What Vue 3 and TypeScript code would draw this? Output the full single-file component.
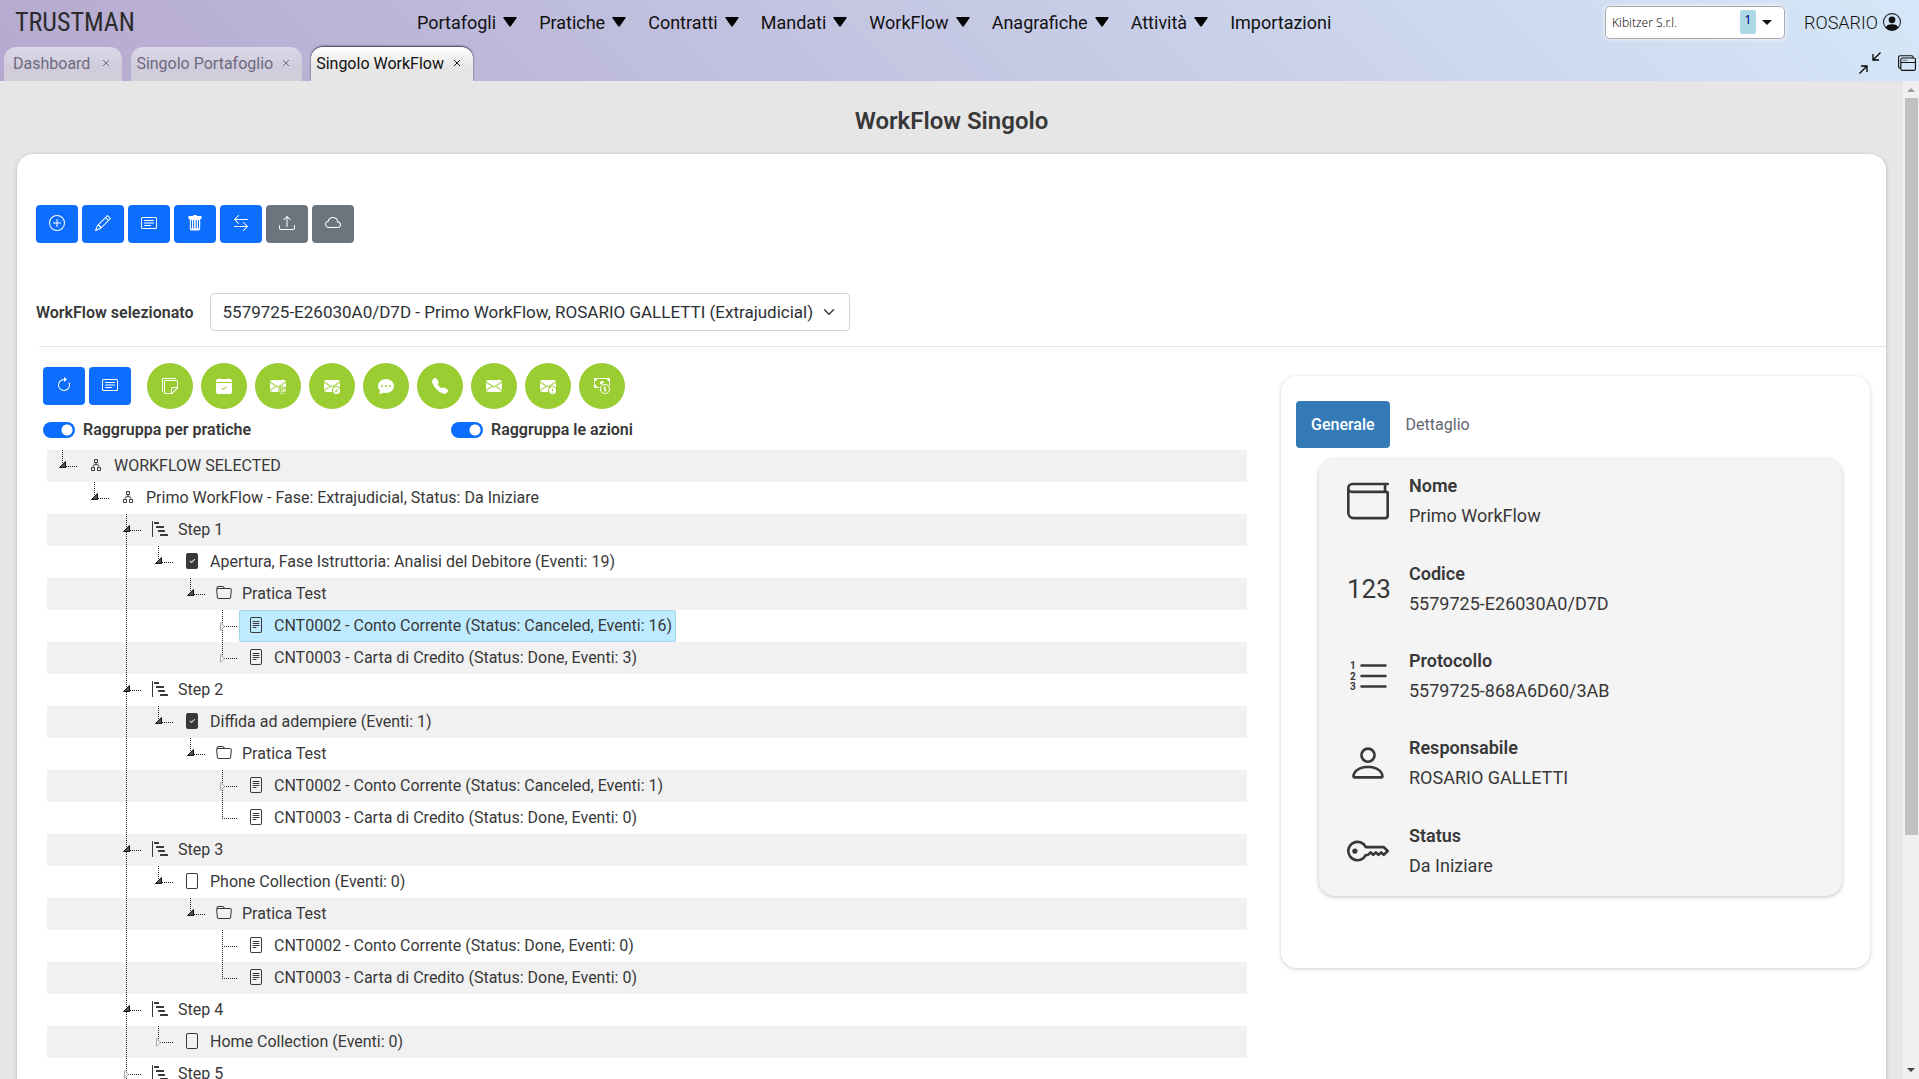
<script setup lang="ts">
import { ref } from 'vue'

type Toggle = 'open' | 'closed' | 'leaf'
type NodeIcon = 'org' | 'steps' | 'fileCheck' | 'file' | 'fileText' | 'folder'

interface TreeRow {
  level: number
  text: string
  icon: NodeIcon
  toggle: Toggle
  last: boolean
}

const icons = {
  plus: 'M8 15A7 7 0 1 1 8 1a7 7 0 0 1 0 14m0 1A8 8 0 1 0 8 0a8 8 0 0 0 0 16 M8 4a.5.5 0 0 1 .5.5v3h3a.5.5 0 0 1 0 1h-3v3a.5.5 0 0 1-1 0v-3h-3a.5.5 0 0 1 0-1h3v-3A.5.5 0 0 1 8 4',
  pencil: 'M12.146.146a.5.5 0 0 1 .708 0l3 3a.5.5 0 0 1 0 .708l-10 10a.5.5 0 0 1-.168.11l-5 2a.5.5 0 0 1-.65-.65l2-5a.5.5 0 0 1 .11-.168zM11.207 2.5 13.5 4.793 14.793 3.5 12.5 1.207zm1.586 3L10.5 3.207 4 9.707V10h.5a.5.5 0 0 1 .5.5v.5h.5a.5.5 0 0 1 .5.5v.5h.293zm-9.761 5.175-.106.106-1.528 3.821 3.821-1.528.106-.106A.5.5 0 0 1 5 12.5V12h-.5a.5.5 0 0 1-.5-.5V11h-.5a.5.5 0 0 1-.468-.325',
  card: 'M14.5 3a.5.5 0 0 1 .5.5v9a.5.5 0 0 1-.5.5h-13a.5.5 0 0 1-.5-.5v-9a.5.5 0 0 1 .5-.5zm-13-1A1.5 1.5 0 0 0 0 3.5v9A1.5 1.5 0 0 0 1.5 14h13a1.5 1.5 0 0 0 1.5-1.5v-9A1.5 1.5 0 0 0 14.5 2z M3 5.5a.5.5 0 0 1 .5-.5h9a.5.5 0 0 1 0 1h-9a.5.5 0 0 1-.5-.5M3 8a.5.5 0 0 1 .5-.5h9a.5.5 0 0 1 0 1h-9A.5.5 0 0 1 3 8m0 2.5a.5.5 0 0 1 .5-.5h6a.5.5 0 0 1 0 1h-6a.5.5 0 0 1-.5-.5',
  trash: 'M2 1h4a1 1 0 0 1 1-1h2a1 1 0 0 1 1 1h4q.5 0 .5.5V4h-13V1.500Q1.500 1 2 1M2.800 4h10.400v9.500a2 2 0 0 1-2 2H4.800a2 2 0 0 1-2-2zM4 5v8.500h1V5zM6.200 5v8.500h1V5zM8.800 5v8.500h1V5zM11 5v8.500h1V5z',
  swap: 'M1 11.5a.5.5 0 0 0 .5.5h11.793l-3.147 3.146a.5.5 0 0 0 .708.708l4-4a.5.5 0 0 0 0-.708l-4-4a.5.5 0 0 0-.708.708L13.293 11H1.5a.5.5 0 0 0-.5.5m14-7a.5.5 0 0 1-.5.5H2.707l3.147 3.146a.5.5 0 1 1-.708.708l-4-4a.5.5 0 0 1 0-.708l4-4a.5.5 0 1 1 .708.708L2.707 4H14.5a.5.5 0 0 1 .5.5',
  upload: 'M.5 9.9a.5.5 0 0 1 .5.5v2.5a1 1 0 0 0 1 1h12a1 1 0 0 0 1-1v-2.5a.5.5 0 0 1 1 0v2.5a2 2 0 0 1-2 2H2a2 2 0 0 1-2-2v-2.5a.5.5 0 0 1 .5-.5 M7.646 1.146a.5.5 0 0 1 .708 0l3 3a.5.5 0 0 1-.708.708L8.5 2.707V11.5a.5.5 0 0 1-1 0V2.707L5.354 4.854a.5.5 0 1 1-.708-.708z',
  cloud: 'M4.406 3.342A5.53 5.53 0 0 1 8 2c2.69 0 4.923 2 5.166 4.579C14.758 6.804 16 8.137 16 9.773 16 11.569 14.502 13 12.687 13H3.781C1.708 13 0 11.366 0 9.318c0-1.763 1.266-3.223 2.942-3.593.143-.863.698-1.723 1.464-2.383m.653.757c-.757.653-1.153 1.44-1.153 2.056v.448l-.445.049C2.064 6.805 1 7.952 1 9.318 1 10.785 2.23 12 3.781 12h8.906C13.98 12 15 10.988 15 9.773c0-1.216-1.02-2.228-2.313-2.228h-.5v-.5C12.188 4.825 10.328 3 8 3a4.53 4.53 0 0 0-2.941 1.1z',
  refresh: 'M8 3a5 5 0 1 0 4.546 2.914.5.5 0 0 1 .908-.417A6 6 0 1 1 8 2z M8 4.466V.534a.25.25 0 0 1 .41-.192l2.36 1.966c.12.1.12.284 0 .384L8.41 4.658A.25.25 0 0 1 8 4.466',
  notes: 'M1.5 0A1.5 1.5 0 0 0 0 1.5V13a1 1 0 0 0 1 1V1.5a.5.5 0 0 1 .5-.5H14a1 1 0 0 0-1-1z M3.5 2A1.5 1.5 0 0 0 2 3.5v11A1.5 1.5 0 0 0 3.5 16h6.086a1.5 1.5 0 0 0 1.06-.44l4.915-4.914A1.5 1.5 0 0 0 16 9.586V3.5A1.5 1.5 0 0 0 14.5 2zM3 3.5a.5.5 0 0 1 .5-.5h11a.5.5 0 0 1 .5.5V9h-4.5A1.5 1.5 0 0 0 9 10.5V15H3.5a.5.5 0 0 1-.5-.5zm7 11.293V10.5a.5.5 0 0 1 .5-.5h4.293z',
  calendar: 'M4 .5a.5.5 0 0 0-1 0V1H2a2 2 0 0 0-2 2v1h16V3a2 2 0 0 0-2-2h-1V.5a.5.5 0 0 0-1 0V1H4zM16 14V5H0v9a2 2 0 0 0 2 2h12a2 2 0 0 0 2-2m-5.146-5.146-3 3a.5.5 0 0 1-.708 0l-1.5-1.5a.5.5 0 0 1 .708-.708L7.5 10.793l2.646-2.647a.5.5 0 0 1 .708.708',
  envelope: 'M.05 3.555A2 2 0 0 1 2 2h12a2 2 0 0 1 1.95 1.555L8 8.414zM0 4.697v7.104l5.803-3.558zM6.761 8.83l-6.57 4.027A2 2 0 0 0 2 14h12a2 2 0 0 0 1.808-1.144l-6.57-4.027L8 9.586zm3.436-.586L16 11.801V4.697z',
  envelopeCut: 'M.05 3.555A2 2 0 0 1 2 2h12a2 2 0 0 1 1.95 1.555L8 8.414zM0 4.697v7.104l5.803-3.558zM6.761 8.83l-6.57 4.026A2 2 0 0 0 2 14h6.256A4.5 4.5 0 0 1 8 12.5a4.49 4.49 0 0 1 1.606-3.446l-.367-.225L8 9.586zM16 4.697v4.974A4.5 4.5 0 0 0 12.5 8a4.5 4.5 0 0 0-1.965.45l-.338-.207z',
  badgeCheck: 'M16 12.5a3.5 3.5 0 1 1-7 0 3.5 3.5 0 0 1 7 0m-1.993-1.679a.5.5 0 0 0-.686.172l-1.17 1.95-.547-.547a.5.5 0 0 0-.708.708l.774.773a.75.75 0 0 0 1.174-.144l1.335-2.226a.5.5 0 0 0-.172-.686',
  badgeAlert: 'M12.5 16a3.5 3.5 0 1 0 0-7 3.5 3.5 0 0 0 0 7m.5-5v1.5a.5.5 0 0 1-1 0V11a.5.5 0 0 1 1 0m0 3a.5.5 0 1 1-1 0 .5.5 0 0 1 1 0',
  chat: 'M16 8c0 3.866-3.582 7-8 7a9 9 0 0 1-2.347-.306c-.584.296-1.925.864-4.181 1.234-.2.032-.352-.176-.273-.362.354-.836.674-1.95.77-2.966C.744 11.37 0 9.76 0 8c0-3.866 3.582-7 8-7s8 3.134 8 7M5 8a1 1 0 1 0-2 0 1 1 0 0 0 2 0m4 0a1 1 0 1 0-2 0 1 1 0 0 0 2 0m3 1a1 1 0 1 0 0-2 1 1 0 0 0 0 2',
  phone: 'M1.885.511a1.745 1.745 0 0 1 2.61.163L6.29 2.98c.329.423.445.974.315 1.494l-.547 2.19a.68.68 0 0 0 .178.643l2.457 2.457a.68.68 0 0 0 .644.178l2.189-.547a1.75 1.75 0 0 1 1.494.315l2.306 1.794c.829.645.905 1.87.163 2.611l-1.034 1.034c-.74.74-1.846 1.065-2.877.702a18.6 18.6 0 0 1-7.01-4.42 18.6 18.6 0 0 1-4.42-7.009c-.362-1.03-.037-2.137.703-2.877z',
  cash: 'M11 15a4 4 0 1 0 0-8 4 4 0 0 0 0 8m5-4a5 5 0 1 1-10 0 5 5 0 0 1 10 0 M1 0a1 1 0 0 0-1 1v8a1 1 0 0 0 1 1h4.083q.088-.517.258-1H3a2 2 0 0 0-2-2V3a2 2 0 0 0 2-2h10a2 2 0 0 0 2 2v3.528c.38.34.717.728 1 1.154V1a1 1 0 0 0-1-1z M9.998 5.083 10 5a2 2 0 1 0-3.132 1.65 6 6 0 0 1 3.13-1.567',
  steps: 'M.5 0a.5.5 0 0 1 .5.5v15a.5.5 0 0 1-1 0V.5A.5.5 0 0 1 .5 0M2 1.5a.5.5 0 0 1 .5-.5h4a.5.5 0 0 1 .5.5v1a.5.5 0 0 1-.5.5h-4a.5.5 0 0 1-.5-.5zm2 4a.5.5 0 0 1 .5-.5h7a.5.5 0 0 1 .5.5v1a.5.5 0 0 1-.5.5h-7a.5.5 0 0 1-.5-.5zm2 4a.5.5 0 0 1 .5-.5h6a.5.5 0 0 1 .5.5v1a.5.5 0 0 1-.5.5h-6a.5.5 0 0 1-.5-.5zm2 4a.5.5 0 0 1 .5-.5h7a.5.5 0 0 1 .5.5v1a.5.5 0 0 1-.5.5h-7a.5.5 0 0 1-.5-.5z',
  fileCheck: 'M12 0H4a2 2 0 0 0-2 2v12a2 2 0 0 0 2 2h8a2 2 0 0 0 2-2V2a2 2 0 0 0-2-2m-1.146 6.854-3 3a.5.5 0 0 1-.708 0l-1.5-1.5a.5.5 0 1 1 .708-.708L7.5 8.793l2.646-2.647a.5.5 0 0 1 .708.708',
  file: 'M4 0a2 2 0 0 0-2 2v12a2 2 0 0 0 2 2h8a2 2 0 0 0 2-2V2a2 2 0 0 0-2-2zm0 1h8a1 1 0 0 1 1 1v12a1 1 0 0 1-1 1H4a1 1 0 0 1-1-1V2a1 1 0 0 1 1-1',
  fileText: 'M5 4a.5.5 0 0 0 0 1h6a.5.5 0 0 0 0-1zm-.5 2.5A.5.5 0 0 1 5 6h6a.5.5 0 0 1 0 1H5a.5.5 0 0 1-.5-.5M5 8a.5.5 0 0 0 0 1h6a.5.5 0 0 0 0-1zm0 2a.5.5 0 0 0 0 1h3a.5.5 0 0 0 0-1z M2 2a2 2 0 0 1 2-2h8a2 2 0 0 1 2 2v12a2 2 0 0 1-2 2H4a2 2 0 0 1-2-2zm10-1H4a1 1 0 0 0-1 1v12a1 1 0 0 0 1 1h8a1 1 0 0 0 1-1V2a1 1 0 0 0-1-1',
  folder: 'M.54 3.87.5 3a2 2 0 0 1 2-2h3.672a2 2 0 0 1 1.414.586l.828.828A2 2 0 0 0 9.828 3h3.982a2 2 0 0 1 1.992 2.181l-.637 7A2 2 0 0 1 13.174 14H2.826a2 2 0 0 1-1.991-1.819l-.637-7a2 2 0 0 1 .342-1.31zM2.19 4a1 1 0 0 0-.996 1.09l.637 7a1 1 0 0 0 .995.91h10.348a1 1 0 0 0 .995-.91l.637-7A1 1 0 0 0 13.81 4zm4.69-1.707A1 1 0 0 0 6.172 2H2.5a1 1 0 0 0-1 .981l.006.139q.323-.119.684-.12h5.396z',
  personCircle: 'M0 8a8 8 0 1 1 16 0A8 8 0 0 1 0 8m8-7a7 7 0 0 0-5.468 11.37C3.242 11.226 4.805 10 8 10s4.757 1.225 5.468 2.37A7 7 0 0 0 8 1',
  windows: 'M4.5 6a.5.5 0 1 0 0-1 .5.5 0 0 0 0 1M6 6a.5.5 0 1 0 0-1 .5.5 0 0 0 0 1m2-.5a.5.5 0 1 1-1 0 .5.5 0 0 1 1 0 M12 1a2 2 0 0 1 2 2 2 2 0 0 1 2 2v8a2 2 0 0 1-2 2H4a2 2 0 0 1-2-2 2 2 0 0 1-2-2V3a2 2 0 0 1 2-2zM2 12V5a2 2 0 0 1 2-2h9a1 1 0 0 0-1-1H2a1 1 0 0 0-1 1v8a1 1 0 0 0 1 1m1-4v5a1 1 0 0 0 1 1h10a1 1 0 0 0 1-1V8zm12-1V5a1 1 0 0 0-1-1H4a1 1 0 0 0-1 1v2z',
  wallet: 'M0 3a2 2 0 0 1 2-2h13.5a.5.5 0 0 1 0 1H15v2a1 1 0 0 1 1 1v8.5a1.5 1.5 0 0 1-1.5 1.5h-12A2.5 2.5 0 0 1 0 12.5zm1 1.732V12.5A1.5 1.5 0 0 0 2.5 14h12a.5.5 0 0 0 .5-.5V5H2a2 2 0 0 1-1-.268M1 3a1 1 0 0 0 1 1h12V2H2a1 1 0 0 0-1 1',
  person: 'M8 8a3 3 0 1 0 0-6 3 3 0 0 0 0 6m2-3a2 2 0 1 1-4 0 2 2 0 0 1 4 0m4 8c0 1-1 1-1 1H3s-1 0-1-1 1-4 6-4 6 3 6 4m-1-.004c-.001-.246-.154-.986-.832-1.664C11.516 10.68 10.289 10 8 10s-3.516.68-4.168 1.332c-.678.678-.83 1.418-.832 1.664z',
  key: 'M0 8a4 4 0 0 1 7.465-2H14a.5.5 0 0 1 .354.146l1.5 1.5a.5.5 0 0 1 0 .708l-1.5 1.5a.5.5 0 0 1-.708 0L13 9.207l-.646.647a.5.5 0 0 1-.708 0L11 9.207l-.646.647a.5.5 0 0 1-.708 0L9 9.207l-.646.647A.5.5 0 0 1 8 10h-.535A4 4 0 0 1 0 8m4-3a3 3 0 1 0 2.712 4.285A.5.5 0 0 1 7.163 9h.63l.853-.854a.5.5 0 0 1 .708 0l.646.647.646-.647a.5.5 0 0 1 .708 0l.646.647.646-.647a.5.5 0 0 1 .708 0l.646.647.793-.793-1-1h-6.63a.5.5 0 0 1-.451-.285A3 3 0 0 0 4 5M4 8a1 1 0 1 1-2 0 1 1 0 0 1 2 0',
}

const menu = ['Portafogli', 'Pratiche', 'Contratti', 'Mandati', 'WorkFlow', 'Anagrafiche', 'Attività']

const pageTabs = [
  { label: 'Dashboard', wide: true, active: false },
  { label: 'Singolo Portafoglio', wide: false, active: false },
  { label: 'Singolo WorkFlow', wide: false, active: true },
]

const tools = [
  { label: 'Aggiungi', path: icons.plus, grey: false },
  { label: 'Modifica', path: icons.pencil, grey: false },
  { label: 'Dettagli', path: icons.card, grey: false },
  { label: 'Elimina', path: icons.trash, grey: false },
  { label: 'Scambia', path: icons.swap, grey: false },
  { label: 'Carica', path: icons.upload, grey: true },
  { label: 'Cloud', path: icons.cloud, grey: true },
]

const actions = [
  { label: 'Nota', path: icons.notes, extra: '' },
  { label: 'Appuntamento', path: icons.calendar, extra: '' },
  { label: 'Email', path: icons.envelopeCut, extra: 'at' },
  { label: 'PEC', path: icons.envelopeCut + icons.badgeCheck, extra: '' },
  { label: 'Messaggio', path: icons.chat, extra: '' },
  { label: 'Telefonata', path: icons.phone, extra: '' },
  { label: 'Lettera', path: icons.envelope, extra: '' },
  { label: 'Raccomandata', path: icons.envelopeCut + icons.badgeAlert, extra: '' },
  { label: 'Incasso', path: icons.cash, extra: 'coin' },
]

const row = (level: number, text: string, icon: NodeIcon, toggle: Toggle, last = true): TreeRow => ({
  level, text, icon, toggle, last,
})

const rows: TreeRow[] = [
  row(0, 'WORKFLOW SELECTED', 'org', 'open'),
  row(1, 'Primo WorkFlow - Fase: Extrajudicial, Status: Da Iniziare', 'org', 'open'),
  row(2, 'Step 1', 'steps', 'open', false),
  row(3, 'Apertura, Fase Istruttoria: Analisi del Debitore (Eventi: 19)', 'fileCheck', 'open'),
  row(4, 'Pratica Test', 'folder', 'open'),
  row(5, 'CNT0002 - Conto Corrente (Status: Canceled, Eventi: 16)', 'fileText', 'closed', false),
  row(5, 'CNT0003 - Carta di Credito (Status: Done, Eventi: 3)', 'fileText', 'closed'),
  row(2, 'Step 2', 'steps', 'open', false),
  row(3, 'Diffida ad adempiere (Eventi: 1)', 'fileCheck', 'open'),
  row(4, 'Pratica Test', 'folder', 'open'),
  row(5, 'CNT0002 - Conto Corrente (Status: Canceled, Eventi: 1)', 'fileText', 'closed', false),
  row(5, 'CNT0003 - Carta di Credito (Status: Done, Eventi: 0)', 'fileText', 'leaf'),
  row(2, 'Step 3', 'steps', 'open', false),
  row(3, 'Phone Collection (Eventi: 0)', 'file', 'open'),
  row(4, 'Pratica Test', 'folder', 'open'),
  row(5, 'CNT0002 - Conto Corrente (Status: Done, Eventi: 0)', 'fileText', 'leaf', false),
  row(5, 'CNT0003 - Carta di Credito (Status: Done, Eventi: 0)', 'fileText', 'leaf'),
  row(2, 'Step 4', 'steps', 'open', false),
  row(3, 'Home Collection (Eventi: 0)', 'file', 'closed'),
  row(2, 'Step 5', 'steps', 'closed', false),
]

const details = [
  { icon: 'wallet', name: 'Nome', value: 'Primo WorkFlow' },
  { icon: 'digits', name: 'Codice', value: '5579725-E26030A0/D7D' },
  { icon: 'list', name: 'Protocollo', value: '5579725-868A6D60/3AB' },
  { icon: 'person', name: 'Responsabile', value: 'ROSARIO GALLETTI' },
  { icon: 'key', name: 'Status', value: 'Da Iniziare' },
]

const detailPaths: Record<string, string> = { wallet: icons.wallet, person: icons.person, key: icons.key }

const groupCases = ref(true)
const groupActions = ref(true)
const selectedRow = ref(5)
const detailTab = ref('Generale')
</script>

<template>
  <div class="app">
    <header class="header">
      <div class="bar">
        <a class="logo" href="#">TRUSTMAN</a>
        <nav class="menu">
          <a v-for="m in menu" :key="m" href="#" class="menu-item">
            <span>{{ m }}</span>
            <svg class="caret" viewBox="0 0 14 10"><path d="M1 0h12q1 0 .6 1L8 9q-1 1-2 0L.4 1Q0 0 1 0" /></svg>
          </a>
          <a href="#" class="menu-item">Importazioni</a>
        </nav>
        <div class="account">
          <button class="company" type="button">
            <span class="company-name">Kibitzer S.r.l.</span>
            <span class="company-count">1</span>
            <svg class="company-caret" viewBox="0 0 10 5"><path d="M0 0h10L5 5z" /></svg>
          </button>
          <a class="user" href="#">
            <span>ROSARIO</span>
            <svg class="user-icon" viewBox="0 0 16 16">
              <circle cx="8" cy="6" r="3" />
              <path fill-rule="evenodd" :d="icons.personCircle" />
            </svg>
          </a>
        </div>
      </div>
      <div class="tabs">
        <div v-for="t in pageTabs" :key="t.label" class="tab" :class="{ active: t.active, wide: t.wide }">
          <a href="#">{{ t.label }}</a>
          <button type="button" class="tab-close" :aria-label="'Chiudi ' + t.label">
            <svg viewBox="0 0 8 8"><path d="M1 1l6 6M7 1L1 7" /></svg>
          </button>
        </div>
        <div class="window-tools">
          <button type="button" class="plain" aria-label="Riduci">
            <svg class="shrink" viewBox="0 0 22 22">
              <path d="M21.500 .5L14 8M14 2V8H20M.5 21.500L8 14M8 20V14H2" />
            </svg>
          </button>
          <button type="button" class="plain" aria-label="Finestre">
            <svg class="stack" viewBox="0 0 16 16"><path :d="icons.windows" /></svg>
          </button>
        </div>
      </div>
    </header>

    <div class="viewport">
      <main class="content">
        <h1 class="title">WorkFlow Singolo</h1>
        <section class="card">
          <div class="toolbar">
            <button v-for="t in tools" :key="t.label" type="button" class="btn" :class="{ grey: t.grey }" :aria-label="t.label">
              <svg viewBox="0 0 16 16"><path :d="t.path" /></svg>
            </button>
          </div>

          <div class="picker">
            <label for="workflow">WorkFlow selezionato</label>
            <div class="select-wrap">
              <select id="workflow">
                <option>5579725-E26030A0/D7D - Primo WorkFlow, ROSARIO GALLETTI (Extrajudicial)</option>
              </select>
              <svg class="chevron" viewBox="0 0 16 16"><path d="m2 5 6 6 6-6" /></svg>
            </div>
          </div>

          <hr class="rule" />

          <div class="columns">
            <div class="left">
              <div class="actions">
                <button type="button" class="btn" aria-label="Aggiorna">
                  <svg viewBox="0 0 16 16"><path :d="icons.refresh" /></svg>
                </button>
                <button type="button" class="btn" aria-label="Dettagli evento">
                  <svg viewBox="0 0 16 16"><path :d="icons.card" /></svg>
                </button>
                <div class="rounds">
                  <button v-for="a in actions" :key="a.label" type="button" class="round" :aria-label="a.label">
                    <svg viewBox="0 0 16 16">
                      <path fill-rule="evenodd" :d="a.path" />
                      <g v-if="a.extra === 'at'" class="stroke">
                        <circle cx="12.500" cy="12.500" r="1.300" />
                        <path d="M13.800 11.200v1.500q.1 1 1 .9 1-.3.800-1.600a3.200 3.200 0 1 0-1.600 3.300" />
                      </g>
                      <path v-if="a.extra === 'coin'" class="stroke" d="M12.300 9.900q-.3-.7-1.300-.7-1.200 0-1.200.9 0 .7 1.200.9 1.300.2 1.300 1 0 .9-1.300.9-1.100 0-1.300-.8M11 8.500v5" />
                    </svg>
                  </button>
                </div>
              </div>

              <div class="switches">
                <label class="switch"><input v-model="groupCases" type="checkbox" />Raggruppa per pratiche</label>
                <label class="switch"><input v-model="groupActions" type="checkbox" />Raggruppa le azioni</label>
              </div>

              <div class="tree" role="tree">
                <div
                  v-for="(r, i) in rows"
                  :key="i"
                  class="row"
                  role="treeitem"
                  :aria-level="r.level + 1"
                  :aria-selected="i === selectedRow"
                >
                  <span v-for="n in r.level" :key="n" class="guide" :class="{ through: n === 3 }"></span>
                  <span class="guide elbow" :class="{ through: !r.last, half: r.last }">
                    <svg v-if="r.toggle === 'open'" class="mark" viewBox="0 0 7 7"><path class="solid" d="M6.500 .5v6H.5z" /></svg>
                    <svg v-if="r.toggle === 'closed'" class="mark shut" viewBox="0 0 5 9"><path class="hollow" d="M.5 .7L4.400 4.500.5 8.300z" /></svg>
                  </span>
                  <span class="node" :class="{ selected: i === selectedRow }" @click="selectedRow = i">
                    <svg v-if="r.icon === 'org'" class="node-icon" viewBox="0 0 16 16">
                      <path class="line" d="M6.500 2.500h3v3h-3zM8 5.500v1.500M5 9.500q0-2 3-2t3 2M3.500 10.500h3v3h-3zM9.500 10.500h3v3h-3z" />
                    </svg>
                    <svg v-else class="node-icon" viewBox="0 0 16 16"><path :d="icons[r.icon]" /></svg>
                    <span>{{ r.text }}</span>
                  </span>
                </div>
              </div>
            </div>

            <aside class="panel">
              <div class="panel-tabs">
                <button
                  v-for="t in ['Generale', 'Dettaglio']"
                  :key="t"
                  type="button"
                  :class="{ on: detailTab === t }"
                  @click="detailTab = t"
                >{{ t }}</button>
              </div>
              <dl class="facts">
                <div v-for="d in details" :key="d.name" class="fact">
                  <span v-if="d.icon === 'digits'" class="digits">123</span>
                  <svg v-else-if="d.icon === 'list'" class="fact-icon" viewBox="0 0 42 42">
                    <path class="rules" d="M14.500 10.500h24M14.500 21h24M14.500 31.500h24" />
                    <text x="3" y="14">1</text>
                    <text x="3" y="25">2</text>
                    <text x="3" y="35">3</text>
                  </svg>
                  <svg v-else class="fact-icon" viewBox="0 0 16 16"><path :d="detailPaths[d.icon]" /></svg>
                  <div class="fact-text">
                    <dt>{{ d.name }}</dt>
                    <dd>{{ d.value }}</dd>
                  </div>
                </div>
              </dl>
            </aside>
          </div>
        </section>
      </main>
      <div class="scroll">
        <svg viewBox="0 0 8 4"><path class="dim" d="M4 0l4 4H0z" /></svg>
        <div class="track"><div class="thumb"></div></div>
        <svg viewBox="0 0 8 4"><path d="M0 0h8L4 4z" /></svg>
      </div>
    </div>
  </div>
</template>

<style>
html,
body {
  height: 100%;
  overflow: hidden;
}
</style>

<style scoped>
.app,
.app * {
  box-sizing: border-box;
}
.app {
  display: flex;
  flex-direction: column;
  height: 100vh;
  overflow: hidden;
  font-family: Roboto, "Liberation Sans", sans-serif;
  font-size: 16px;
  color: #383838;
  background: #e6e6e6;
}
button,
select,
input {
  margin: 0;
  font: inherit;
  color: inherit;
}
button {
  padding: 0;
  border: 0;
  cursor: pointer;
}
a {
  color: inherit;
  text-decoration: none;
}
svg {
  display: block;
  flex: none;
  fill: currentColor;
}

.header {
  flex: none;
  height: 81px;
  display: flex;
  flex-direction: column;
  justify-content: space-between;
  color: #111;
  background: linear-gradient(45deg, #b5a9cf, #d5e7f8);
}
.bar {
  display: flex;
  align-items: center;
  height: 44px;
  padding: 0 18px 0 15px;
}
.logo {
  width: 402px;
  font-family: "Roboto Condensed", Roboto, sans-serif;
  font-size: 26px;
  font-weight: 400;
  color: #2b2b2b;
}
.menu {
  display: flex;
  gap: 22px;
  font-size: 18px;
}
.menu-item {
  display: flex;
  align-items: center;
  gap: 7px;
}
.caret {
  width: 14px;
  height: 10px;
  fill: #000;
}
.account {
  display: flex;
  align-items: center;
  gap: 19px;
  margin-left: auto;
}
.company {
  display: flex;
  align-items: center;
  width: 180px;
  height: 33px;
  padding: 0 12px 0 6px;
  border: 1px solid #aaa;
  border-radius: 5px;
  background: #fff;
  box-shadow: 0 0 4px #fff;
  font-family: "Noto Sans", "Open Sans", sans-serif;
  font-size: 12px;
  font-weight: 300;
}
.company-name {
  flex: 1;
  text-align: left;
}
.company-count {
  width: 16px;
  height: 24px;
  margin-right: 6px;
  line-height: 20px;
  border-radius: 2px;
  background: #add8e6;
  color: #000080;
  font-weight: 400;
}
.company-caret {
  width: 10px;
  height: 5px;
}
.user {
  display: flex;
  align-items: center;
  gap: 5px;
  font-size: 18px;
  font-weight: 300;
}
.user-icon {
  width: 18px;
  height: 18px;
}
.tabs {
  display: flex;
  align-items: flex-end;
  gap: 9px;
  height: 34px;
  padding: 0 3px 0 4px;
}
.tab {
  display: flex;
  align-items: center;
  gap: 9px;
  height: 34px;
  padding: 0 12px 2px 5px;
  border-radius: 12px 12px 0 0;
  color: #6f697f;
  background: linear-gradient(#dcd8e9, #cfccdb 60%, #d1cfdc);
}
.tab.wide {
  gap: 12px;
  padding-left: 9px;
}
.tab.active {
  color: #111;
  background: linear-gradient(#fff, #e6e6e6 60%);
  box-shadow: 0 -1px 2px #3c3850;
  clip-path: inset(-4px -4px 0 -4px);
}
.tab-close {
  background: none;
}
.tab-close svg {
  width: 8px;
  height: 8px;
  fill: none;
  stroke: currentColor;
}
.window-tools {
  display: flex;
  align-items: center;
  gap: 17px;
  height: 34px;
  margin-left: auto;
  padding-bottom: 2px;
}
.plain {
  background: none;
}
.shrink {
  width: 22px;
  height: 22px;
  fill: none;
  stroke: #000;
  stroke-width: 1.3;
}
.stack {
  width: 18px;
  height: 18px;
}

.viewport {
  flex: 1;
  min-height: 0;
  display: flex;
}
.content {
  flex: 1;
  min-width: 0;
  overflow: hidden;
  padding: 0 17px;
}
.title {
  margin: 0;
  height: 73px;
  padding-top: 24px;
  line-height: 32px;
  font-size: 24px;
  font-weight: 600;
  text-align: center;
}
.card {
  padding-top: 51px;
  border-radius: 16px 16px 0 0;
  background: #fff;
  box-shadow: 0 1px 4px rgba(0, 0, 0, .2);
}
.toolbar {
  display: flex;
  gap: 4px;
  padding-left: 19px;
}
.btn {
  width: 42px;
  height: 38px;
  padding-bottom: 3px;
  display: flex;
  align-items: center;
  justify-content: center;
  border-radius: 4px;
  color: #fff;
  background: #0d6efd;
}
.btn.grey {
  background: #6c757d;
}
.btn svg {
  width: 16px;
  height: 16px;
}
.picker {
  display: flex;
  align-items: center;
  gap: 16px;
  margin-top: 50px;
  padding-left: 19px;
}
.picker label {
  font-weight: 600;
}
.select-wrap {
  position: relative;
}
.select-wrap select {
  appearance: none;
  width: 640px;
  height: 38px;
  padding: 0 36px 0 12px;
  border: 1px solid #ced4da;
  border-radius: 4px;
  background: #fff;
  color: #2c3034;
  font-size: 17px;
}
.chevron {
  position: absolute;
  top: 13px;
  right: 15px;
  width: 12px;
  height: 12px;
  fill: none;
  stroke: #343a40;
  stroke-width: 2;
  stroke-linecap: round;
  pointer-events: none;
}
.rule {
  height: 1px;
  margin: 15px 0 0 22px;
  border: 0;
  background: #e2e5e9;
}
.columns {
  display: grid;
  grid-template-columns: 1200fr 589fr;
  gap: 34px;
  align-items: start;
  padding: 16px 16px 0 30px;
}
.left {
  min-width: 0;
}
.actions {
  display: flex;
  align-items: center;
  gap: 4px;
  margin-left: -4px;
}
.rounds {
  display: flex;
  gap: 8px;
  margin-left: 12px;
}
.round {
  width: 46px;
  height: 46px;
  display: flex;
  align-items: center;
  justify-content: center;
  border-radius: 50%;
  color: #fff;
  background: #9acd32;
}
.round svg {
  width: 16px;
  height: 16px;
}
.stroke {
  fill: none;
  stroke: currentColor;
  stroke-width: .8;
}
.switches {
  display: flex;
  height: 41px;
  margin-left: -4px;
  font-weight: 600;
}
.switch {
  display: flex;
  align-items: center;
  gap: 8px;
  width: 408px;
}
.switch input {
  appearance: none;
  width: 32px;
  height: 16px;
  border-radius: 8px;
  background: radial-gradient(circle at 24px 8px, #fff 5px, transparent 6px) #0d6efd;
}
.switch input:not(:checked) {
  background: radial-gradient(circle at 8px 8px, #fff 5px, transparent 6px) #adb5bd;
}

.row {
  display: flex;
  height: 32px;
}
.row:nth-child(odd) {
  background: #f1f1f1;
}
.guide {
  position: relative;
  flex: none;
  width: 32px;
}
.guide.through::before,
.guide.half::before {
  content: "";
  position: absolute;
  left: 15px;
  top: 0;
  width: 1px;
  height: 32px;
  background: repeating-linear-gradient(#222 0 1px, transparent 1px 2px);
}
.guide.half::before {
  height: 17px;
}
.elbow::after {
  content: "";
  position: absolute;
  left: 15px;
  top: 16px;
  width: 15px;
  height: 1px;
  background: repeating-linear-gradient(90deg, #222 0 1px, transparent 1px 2px);
}
.mark {
  position: absolute;
  z-index: 1;
  left: 12px;
  top: 11px;
  width: 7px;
  height: 7px;
}
.mark.shut {
  left: 13px;
  top: 12px;
  width: 5px;
  height: 9px;
}
.solid {
  fill: #555;
  stroke: #111;
}
.hollow {
  fill: #fff;
  stroke: #999;
  stroke-width: .8;
}
.node {
  display: flex;
  align-items: center;
  gap: 10px;
  padding: 0 3px 2px 8px;
  border: 1px solid transparent;
  border-radius: 2px;
  cursor: pointer;
}
.node.selected {
  background: #beebff;
  border-color: #a5d5ea;
}
.node-icon {
  width: 16px;
  height: 16px;
}
.line {
  fill: none;
  stroke: currentColor;
}

.panel {
  margin-top: 13px;
  padding: 25px 28px 72px 15px;
  border-radius: 16px;
  background: #fff;
  box-shadow: 0 1px 4px rgba(0, 0, 0, .2);
}
.panel-tabs {
  display: flex;
  gap: 1px;
}
.panel-tabs button {
  height: 47px;
  padding: 0 15px;
  border-radius: 4px;
  background: none;
  color: #5f6670;
}
.panel-tabs button.on {
  background: #337ab7;
  color: #fff;
  font-weight: 500;
}
.facts {
  display: grid;
  grid-auto-rows: 1fr;
  min-height: 437px;
  margin: 11px 0 0 23px;
  padding: 0 0 0 28px;
  border-radius: 16px;
  background: #f4f4f4;
  box-shadow: 0 1px 4px rgba(0, 0, 0, .25);
}
.fact {
  display: flex;
  align-items: center;
  gap: 20px;
  padding-bottom: 3px;
}
.fact-icon {
  width: 42px;
  height: 42px;
}
.fact-icon text {
  font-size: 10px;
  font-weight: 700;
}
.rules {
  stroke: currentColor;
  stroke-width: 2.5;
  stroke-linecap: round;
}
.digits {
  width: 42px;
  font-size: 26px;
  line-height: 42px;
}
.fact-text {
  font-size: 18px;
  line-height: 30px;
}
dt {
  font-weight: 600;
}
dd {
  margin: 0;
}

.scroll {
  flex: none;
  display: flex;
  flex-direction: column;
  align-items: center;
  width: 16px;
  padding: 7px 0;
  background: #f0f0f0;
  color: #444;
}
.scroll svg {
  width: 8px;
  height: 4px;
}
.dim {
  fill: #999;
}
.track {
  flex: 1;
  width: 13px;
  padding-top: 6px;
}
.thumb {
  height: 76%;
  background: #c0c0c0;
}
</style>
